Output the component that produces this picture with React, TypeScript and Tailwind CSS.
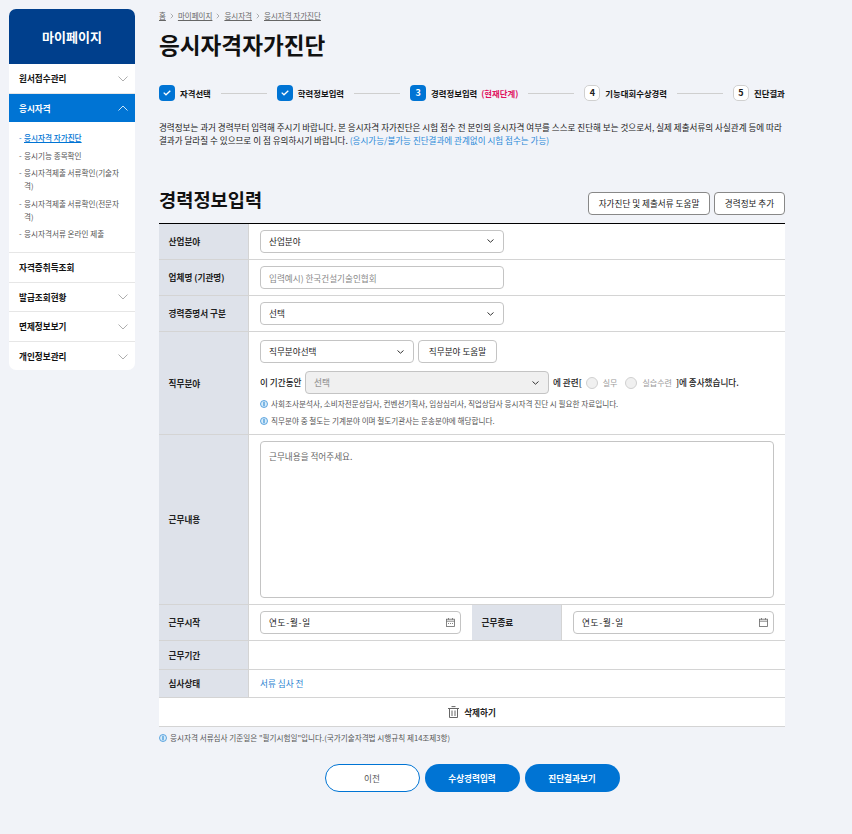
import { ChevronRight } from "lucide-react";

const font = { fontFamily: '"Noto Sans CJK KR", "Noto Sans", sans-serif' };

function Chevron({ up, className }: { up?: boolean; className?: string }) {
  return (
    <svg width="10" height="6" viewBox="0 0 10 6" fill="none" stroke="currentColor" strokeWidth="0.8" className={className}>
      <polyline points={up ? "0.5,5.5 5,1 9.5,5.5" : "0.5,0.5 5,5 9.5,0.5"} />
    </svg>
  );
}

function SmallChevron() {
  return (
    <svg width="7" height="4" viewBox="0 0 7 4" fill="none" stroke="#333" strokeWidth="1" className="shrink-0">
      <polyline points="0.5,0.5 3.5,3.2 6.5,0.5" />
    </svg>
  );
}

function SideItem({ label, arrow = true, h = "h-[29px]" }: { label: string; arrow?: boolean; h?: string }) {
  return (
    <div className={`${h} flex items-center justify-between border-b border-[#e6e6e6] pl-[10px] pr-[7px] last:border-b-0`}>
      <span className="text-[8.6px] font-bold text-[#111]">{label}</span>
      {arrow && <Chevron className="text-[#999]" />}
    </div>
  );
}

function SubItem({ children, active }: { children: React.ReactNode; active?: boolean }) {
  return (
    <li className="flex pb-[4.6px] text-[7.6px] leading-[13px]">
      <span className={active ? "w-[5px] shrink-0 text-[#0074d4]" : "w-[5px] shrink-0 text-[#555]"}>-</span>
      <span className={active ? "font-medium text-[#0074d4] underline" : "text-[#555]"}>{children}</span>
    </li>
  );
}

function Step({ n, label, done, current, extra }: { n: number; label: string; done?: boolean; current?: boolean; extra?: string }) {
  return (
    <div className="flex shrink-0 items-center gap-[5px]">
      {done || current ? (
        <span className="flex size-[16px] items-center justify-center rounded-[4px] bg-[#0074d4] text-[9px] font-bold text-white">
          {done ? (
            <svg width="8" height="6" viewBox="0 0 8 6" fill="none" stroke="white" strokeWidth="1.3">
              <polyline points="0.7,2.6 3,4.8 7.3,0.7" />
            </svg>
          ) : (
            n
          )}
        </span>
      ) : (
        <span className="flex size-[16px] items-center justify-center rounded-[5px] border border-[#d0d0d0] bg-white text-[9px] font-bold text-[#222]">
          {n}
        </span>
      )}
      <span className="whitespace-nowrap text-[8.4px] font-bold text-[#111]">
        {label}
        {extra && <span className="ml-[2px] text-[#e0115f]"> {extra}</span>}
      </span>
    </div>
  );
}

function Line() {
  return <span className="mx-[10px] h-px w-[46px] shrink-0 bg-[#cfcfcf]" />;
}

function SelectBox({ text, w = "w-[244px]", disabled }: { text: string; w?: string; disabled?: boolean }) {
  return (
    <div
      className={`${w} flex h-[23px] shrink-0 items-center justify-between rounded-[4px] border border-[#c4c4c4] pl-[8px] pr-[9px] text-[8.6px] ${
        disabled ? "bg-[#f0f0f0] text-[#999]" : "bg-white text-[#222]"
      }`}
    >
      <span>{text}</span>
      <SmallChevron />
    </div>
  );
}

function Label({ children, w = "w-[90px]" }: { children: React.ReactNode; w?: string }) {
  return (
    <div className={`${w} flex shrink-0 items-center border-r border-[#d4d4d4] bg-[#dee2ea] pl-[9.6px] text-[8.6px] font-bold text-[#222]`}>
      {children}
    </div>
  );
}

function Row({ h, children }: { h: string; children: React.ReactNode }) {
  return <div className={`${h} flex border-b border-[#d4d4d4]`}>{children}</div>;
}

function InfoIcon() {
  return (
    <svg width="8" height="8" viewBox="0 0 8 8" className="shrink-0">
      <circle cx="4" cy="4" r="3.5" fill="#d9ecfa" stroke="#3b93d8" strokeWidth="0.8" />
      <rect x="3.4" y="1.8" width="1.2" height="4.4" fill="#3b93d8" />
    </svg>
  );
}

function Note({ children }: { children: React.ReactNode }) {
  return (
    <p className="flex items-center gap-[3px] text-[7.6px] leading-[11px] text-[#555]">
      <InfoIcon />
      <span>{children}</span>
    </p>
  );
}

function Radio({ label }: { label: string }) {
  return (
    <span className="flex items-center gap-[5px] text-[8px] font-normal text-[#999]">
      <span className="size-[12px] rounded-full border border-[#d0d0d0] bg-[#f0f0f0]" />
      {label}
    </span>
  );
}

function CalendarIcon({ dots }: { dots?: boolean }) {
  return (
    <svg width="9" height="9" viewBox="0 0 9 9" fill="none" stroke="#666" strokeWidth="0.8" className="shrink-0">
      <rect x="0.5" y="1.2" width="8" height="7.3" />
      <line x1="0.5" y1="3.2" x2="8.5" y2="3.2" />
      <line x1="2.5" y1="0" x2="2.5" y2="1.6" />
      <line x1="6.5" y1="0" x2="6.5" y2="1.6" />
      {dots && <line x1="2" y1="5.5" x2="7" y2="5.5" strokeDasharray="1 1" />}
    </svg>
  );
}

function TrashIcon() {
  return (
    <svg width="11" height="12" viewBox="0 0 11 12" fill="none" stroke="#666" strokeWidth="1">
      <line x1="0" y1="2.5" x2="11" y2="2.5" />
      <line x1="3.5" y1="0.6" x2="7.5" y2="0.6" />
      <path d="M1.5 3V11.5H9.5V3" />
      <line x1="4" y1="4.5" x2="4" y2="10" />
      <line x1="7" y1="4.5" x2="7" y2="10" />
    </svg>
  );
}

function DateBox({ dots }: { dots?: boolean }) {
  return (
    <div className="flex h-[23px] w-[201px] items-center justify-between rounded-[4px] border border-[#c4c4c4] bg-white pl-[8px] pr-[5px] text-[8.6px] tracking-[0.7px] text-[#222]">
      <span>연도-월-일</span>
      <CalendarIcon dots={dots} />
    </div>
  );
}

function Pill({ children, primary }: { children: React.ReactNode; primary?: boolean }) {
  return (
    <button
      className={
        primary
          ? "h-[28px] w-[95px] rounded-full bg-[#0074d4] text-[8.6px] font-bold text-white"
          : "h-[28px] w-[95px] rounded-full border border-[#0074d4] bg-white text-[8.6px] text-[#555]"
      }
    >
      {children}
    </button>
  );
}

export default function App() {
  return (
    <div className="flex min-h-[834px] bg-[#f1f3f8]" style={font}>
      <aside className="ml-[9px] mt-[9px] h-[361px] w-[126px] shrink-0 overflow-hidden rounded-[7px] bg-white">
        <div className="flex h-[55px] items-center justify-center bg-[#003f8c] text-[13px] font-bold text-white">마이페이지</div>
        <SideItem label="원서접수관리" h="h-[30px]" />
        <div className="flex h-[28px] items-center justify-between bg-[#0074d4] pl-[10px] pr-[7px] text-white">
          <span className="text-[8.6px] font-bold">응시자격</span>
          <Chevron up />
        </div>
        <ul className="h-[131px] border-b border-[#e6e6e6] pl-[10px] pr-[10px] pt-[9px]">
          <SubItem active>응시자격 자가진단</SubItem>
          <SubItem>응시기능 종목확인</SubItem>
          <SubItem>응시자격제출 서류확인(기술자격)</SubItem>
          <SubItem>응시자격제출 서류확인(전문자격)</SubItem>
          <SubItem>응시자격서류 온라인 제출</SubItem>
        </ul>
        <SideItem label="자격증취득조회" arrow={false} h="h-[30px]" />
        <SideItem label="발급조회현황" />
        <SideItem label="면제정보보기" h="h-[30px]" />
        <SideItem label="개인정보관리" />
      </aside>

      <main className="ml-[24px] w-[626px] shrink-0">
        <nav className="mt-[10px] flex h-[12px] items-center gap-[2px] text-[7.5px] text-[#666]">
          <span className="underline">홈</span>
          <ChevronRight size={8} strokeWidth={1.2} className="text-[#444]" />
          <span className="underline">마이페이지</span>
          <ChevronRight size={8} strokeWidth={1.2} className="text-[#444]" />
          <span className="underline">응시자격</span>
          <ChevronRight size={8} strokeWidth={1.2} className="text-[#444]" />
          <span className="underline">응시자격 자가진단</span>
        </nav>
        <h1 className="mt-[7px] text-[22.6px] font-bold leading-[32px] text-[#111]">응시자격자가진단</h1>

        <div className="mt-[24px] flex items-center overflow-hidden">
          <Step n={1} label="자격선택" done />
          <Line />
          <Step n={2} label="학력정보입력" done />
          <Line />
          <Step n={3} label="경력정보입력" current extra="(현재단계)" />
          <Line />
          <Step n={4} label="기능대회수상경력" />
          <Line />
          <Step n={5} label="진단결과" />
        </div>

        <p className="mt-[20px] whitespace-nowrap text-[8.55px] leading-[13px] text-[#222]">
          경력정보는 과거 경력부터 입력해 주시기 바랍니다. 본 응시자격 자가진단은 시험 접수 전 본인의 응시자격 여부를 스스로 진단해 보는 것으로서, 실제 제출서류의 사실관계 등에 따라
          <br />
          결과가 달라질 수 있으므로 이 점 유의하시기 바랍니다. <span className="text-[#2b8ad8]">(응시가능/불가능 진단결과에 관계없이 시험 접수는 가능)</span>
        </p>

        <div className="mt-[45px] flex h-[23px] items-start justify-between">
          <h2 className="text-[18.7px] font-bold leading-[13px] text-[#111]">경력정보입력</h2>
          <div className="flex gap-[4px]">
            <button className="h-[23px] w-[122px] rounded-[4px] border border-[#888] bg-white text-[8.6px] text-[#222]">자가진단 및 제출서류 도움말</button>
            <button className="h-[23px] w-[71px] rounded-[4px] border border-[#888] bg-white text-[8.6px] text-[#222]">경력정보 추가</button>
          </div>
        </div>

        <div className="mt-[8px] border-t border-black bg-white">
          <Row h="h-[36px]">
            <Label>산업분야</Label>
            <div className="flex items-center pb-[1px] pl-[11px]">
              <SelectBox text="산업분야" />
            </div>
          </Row>
          <Row h="h-[36px]">
            <Label>업체명 (기관명)</Label>
            <div className="flex items-center pl-[11px]">
              <input
                placeholder="입력예시) 한국건설기술인협회"
                className="h-[23px] w-[244px] rounded-[4px] border border-[#c4c4c4] bg-white px-[8px] text-[8.6px] placeholder:text-[#888]"
              />
            </div>
          </Row>
          <Row h="h-[36px]">
            <Label>경력증명서 구분</Label>
            <div className="flex items-center pl-[11px]">
              <SelectBox text="선택" />
            </div>
          </Row>
          <Row h="h-[103px]">
            <Label>직무분야</Label>
            <div className="pl-[11px] pt-[8px]">
              <div className="flex gap-[4px]">
                <SelectBox text="직무분야선택" w="w-[154px]" />
                <button className="h-[23px] w-[79px] rounded-[4px] border border-[#c4c4c4] bg-white text-[8.6px] text-[#222]">직무분야 도움말</button>
              </div>
              <div className="mt-[8px] flex items-center text-[8.6px] font-medium text-[#222]">
                <span className="w-[45px]">이 기간동안</span>
                <SelectBox text="선택" w="w-[244px]" disabled />
                <span className="ml-[4px] mr-[4px]">에 관련[</span>
                <Radio label="실무" />
                <span className="w-[8px]" />
                <Radio label="실습수련" />
                <span className="ml-[4px]">]에 종사했습니다.</span>
              </div>
              <div className="mt-[4px] flex flex-col gap-[6px]">
                <Note>사회조사분석사, 소비자전문상담사, 컨벤션기획사, 임상심리사, 직업상담사 응시자격 진단 시 필요한 자료입니다.</Note>
                <Note>직무분야 중 철도는 기계분야 이며 철도기관사는 운송분야에 해당합니다.</Note>
              </div>
            </div>
          </Row>
          <Row h="h-[170px]">
            <Label>근무내용</Label>
            <div className="pl-[11px] pt-[6px]">
              <textarea
                placeholder="근무내용을 적어주세요."
                className="h-[157px] w-[514px] resize-none rounded-[4px] border border-[#c4c4c4] bg-white p-[8px] text-[8.6px] placeholder:text-[#666]"
              />
            </div>
          </Row>
          <Row h="h-[36px]">
            <Label>근무시작</Label>
            <div className="flex w-[223px] shrink-0 items-center pl-[11px]">
              <DateBox dots />
            </div>
            <Label>근무종료</Label>
            <div className="flex items-center pl-[11px]">
              <DateBox />
            </div>
          </Row>
          <Row h="h-[29px]">
            <Label>근무기간</Label>
            <div />
          </Row>
          <Row h="h-[28px]">
            <Label>심사상태</Label>
            <div className="flex items-center pl-[11px] text-[8.6px] text-[#1f7fd0]">서류 심사 전</div>
          </Row>
          <div className="flex h-[29px] items-center justify-center gap-[5px] border-b border-[#d4d4d4] text-[8.6px] font-bold text-[#222]">
            <TrashIcon />
            삭제하기
          </div>
        </div>

        <div className="mt-[5px]">
          <Note>응시자격 서류심사 기준일은 "필기시험일"입니다.(국가기술자격법 시행규칙 제14조제3항)</Note>
        </div>

        <div className="mt-[21px] flex justify-center gap-[5px]">
          <Pill>이전</Pill>
          <Pill primary>수상경력입력</Pill>
          <Pill primary>진단결과보기</Pill>
        </div>
      </main>
    </div>
  );
}
